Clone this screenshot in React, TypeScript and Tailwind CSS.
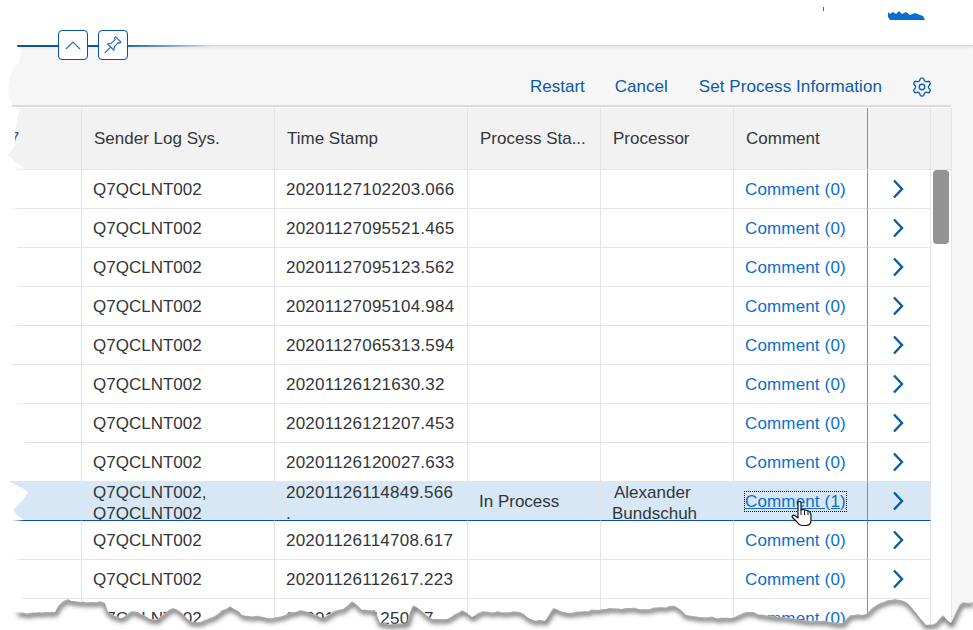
import React from "react";
import { Settings } from "lucide-react";

const rows = [
  "20201127102203.066",
  "20201127095521.465",
  "20201127095123.562",
  "20201127095104.984",
  "20201127065313.594",
  "20201126121630.32",
  "20201126121207.453",
  "20201126120027.633",
  "SEL",
  "20201126114708.617",
  "20201126112617.223",
  "20201126112507.7",
];

const cols = "grid grid-cols-[82px_193px_193px_133px_133px_134px_63px]";

const tearBase =
  "17,612 30,613 45,612 55,612 58,606 62,602 68,599 75,601 80,602 90,602 100,601 105,603 108,612 114,616 120,618 126,615 132,611 140,614 150,619 157,620 165,613 173,608 178,610 182,613 190,621 200,622 207,619 213,617 222,610 230,606 236,610 242,615 255,616 273,618 285,615 300,610 305,611 310,613 323,618 332,612 343,609 348,605 352,601 357,605 362,610 368,610 375,610 380,623 395,624 407,623 410,612 413,605 418,608 423,612 430,618 440,619 447,619 455,614 462,610 467,613 472,617 478,613 483,611 495,612 510,612 520,612 527,617 533,620 545,621 550,613 553,608 560,611 570,613 585,611 603,609 625,608 650,609 660,607 675,606 681,610 686,615 700,617 730,618 743,613 752,612 765,615 776,617 790,618 803,620 820,621 843,623 848,617 850,615 858,614 866,614 872,608 880,603 888,600 895,599 901,600 906,602 912,608 920,618 926,625 936,623 940,618 943,615 947,620 951,623 956,612 960,604 963,602 968,603 973,602";

// the paper's rough edge: the outline above, with a fine fixed jitter
const tear = (() => {
  const pts = tearBase.split(" ").map((p) => p.split(",").map(Number));
  const out: string[] = [];
  pts.forEach(([x, y], i) => {
    out.push(`${x},${y}`);
    const next = pts[i + 1];
    if (!next) return;
    const steps = Math.floor((next[0] - x) / 3);
    for (let s = 1; s < steps; s++) {
      const t = s / steps;
      const px = x + (next[0] - x) * t;
      const py = y + (next[1] - y) * t;
      const j = Math.sin(px * 1.7) * 0.6 + Math.sin(px * 0.73) * 0.4;
      out.push(`${px.toFixed(1)},${(py + j).toFixed(1)}`);
    }
  });
  return out.join(" ");
})();

const leftEdge =
  "0,40 17,40 17,46 21,50 20,60 16,66 12,70 9,80 8,90 9,98 12,104 12,107 20,110 17,120 15,130 15,146 12,150 8,155 13,160 20,165 24,169 12,170 12,208 19,209 19,247 16,248 16,286 21,287 21,325 9,326 9,364 14,365 14,403 25,404 25,442 8,481 20,487 28,492 25,497 20,503 13,510 17,515 24,520 12,521 12,559 22,560 22,598 17,612 0,630";

function Chevron() {
  return (
    <svg width="12" height="20" viewBox="0 0 12 20" className="block">
      <path d="M2 1.5 L10 10 L2 18.5" fill="none" stroke="#0a5aa6" strokeWidth="2.4" />
    </svg>
  );
}

function Row({ time }: { time: string }) {
  const sel = time === "SEL";
  const line = sel ? "border-b-[#0854a0]" : "border-b-[#e5e5e5]";
  const cell = `h-[39px] border-r border-r-[#e5e5e5] border-b ${line} overflow-hidden`;
  const last = `h-[39px] border-r border-r-[#8c8c8c] border-b ${line} overflow-hidden flex items-center`;
  const text = `${cell} flex items-center pt-[2px]`;
  return (
    <div className={`${cols} ${sel ? "bg-[#d8e7f5]" : "bg-white"}`}>
      <div className={cell} />
      {sel ? (
        <>
          <div className={`${cell} pl-[11px] leading-[21px]`}>
            <div>Q7QCLNT002,</div>
            <div>Q7QCLNT002</div>
          </div>
          <div className={`${cell} pl-[11px] leading-[21px] tracking-[0.23px]`}>
            <div>20201126114849.566</div>
            <div>.</div>
          </div>
          <div className={`${text} pl-[11px]`}>In Process</div>
          <div className={`${cell} pl-[11px] leading-[21px]`}>
            <div className="pl-[2px]">Alexander</div>
            <div>Bundschuh</div>
          </div>
          <div className={`${last} pl-[10px]`}>
            <a className="text-[#0a6ed1] underline border border-dotted border-black leading-[19px] tracking-[0.15px]">
              Comment (1)
            </a>
          </div>
        </>
      ) : (
        <>
          <div className={`${text} pl-[11px]`}>Q7QCLNT002</div>
          <div className={`${text} pl-[11px] tracking-[0.23px]`}>{time}</div>
          <div className={cell} />
          <div className={cell} />
          <div className={`${last} pl-[11px] pt-[2px]`}>
            <a className="text-[#0a6ed1] tracking-[0.15px]">Comment (0)</a>
          </div>
        </>
      )}
      <div className={`${cell} flex items-center justify-center pr-[2px]`}>
        <Chevron />
      </div>
    </div>
  );
}

export default function App() {
  return (
    <div className="relative w-[973px] h-[630px] overflow-hidden bg-white text-[17px] text-[#32363a] font-['Liberation_Sans',Arial,sans-serif]">
      <header className="h-[46px] bg-white border-b border-b-[#d9d9d9] shadow-[0_1px_3px_rgba(0,0,0,0.1)] relative z-10" />

      <div className="bg-[#f6f6f7] h-[584px]">
        <div className="h-[61px] border-b-2 border-b-[#dcdcdc] flex items-center justify-end gap-[30px] pr-[18px] text-[#0b5aa5] w-[951px] pt-[23px]">
          <span>Restart</span>
          <span>Cancel</span>
          <span className="tracking-[0.08px] ml-px -mr-px">Set Process Information</span>
          <Settings size={22} strokeWidth={1.5} className="text-[#0a5fb0]" />
        </div>

        <div className="w-[952px] bg-white pt-px">
          <div className="grid grid-cols-[82px_193px_193px_133px_133px_134px_63px_21px] bg-[#f2f2f2] h-[62px] border-b border-b-[#e5e5e5]">
            {["7", "Sender Log Sys.", "Time Stamp", "Process Sta...", "Processor", "Comment", "", ""].map((h, i) => (
              <div
                key={i}
                className={`border-r flex items-center overflow-hidden whitespace-nowrap ${
                  i === 0 ? "pl-[10px] text-[#55585c]" : "pl-[12px]"
                } ${i === 5 ? "border-r-[#8c8c8c]" : "border-r-[#e5e5e5]"}`}
              >
                {h}
              </div>
            ))}
          </div>
          <div className="flex">
            <div className="w-[931px]">
              {rows.map((t) => (
                <Row key={t} time={t} />
              ))}
            </div>
            <div className="w-[21px] border-r border-r-[#e5e5e5] pl-[2px]">
              <div className="w-4 h-[74px] rounded-[4px] bg-[#949494]" />
            </div>
          </div>
        </div>
      </div>

      {/* over the content: the collapse and pin buttons on the header line */}
      <div className="absolute left-[17px] top-[45px] w-[195px] h-[2px] z-20 bg-gradient-to-r from-[#0854a0] via-[#0854a0] to-transparent" />
      <button className="absolute z-30 left-[58px] top-[30px] w-[30px] h-[30px] bg-white border border-[#0854a0] rounded-[4px] flex items-center justify-center">
        <svg width="16" height="9" viewBox="0 0 16 9">
          <path d="M1 8 L8 1 L15 8" fill="none" stroke="#2f6fb5" strokeWidth="1.2" />
        </svg>
      </button>
      <button className="absolute z-30 left-[98px] top-[30px] w-[30px] h-[30px] bg-white border border-[#0854a0] rounded-[4px] flex items-center justify-center">
        <svg width="18" height="18" viewBox="0 0 18 18">
          <path
            d="M0.8 17 L6.2 11.6 M3.6 8 L7.2 7.4 L11.2 3.6 L10.3 2 L11.8 0.9 L16.9 6 L15.8 7.4 L14.3 6.6 L10.4 10.6 L9.9 14.2 Z"
            fill="none"
            stroke="#2f6fb5"
            strokeWidth="1.2"
            strokeLinejoin="round"
          />
        </svg>
      </button>

      {/* the mouse pointer */}
      <svg className="absolute z-30 left-[791px] top-[500px]" width="22" height="27" viewBox="0 0 22 27">
        <path
          d="M7 2.5 C7 1 10 1 10 2.5 L10 10 L12 9.5 L14 10 L16 10.5 L18 11.5 C19.5 12 20 13 20 15 L20 20 C20 23.5 18 25.5 15 25.5 L11 25.5 C8.5 25.5 7.5 24 6 22 L1.5 17.5 C0.5 16 2 14.5 3.5 15.3 L7 18 Z"
          fill="#fff"
          stroke="#111"
          strokeWidth="1.2"
          strokeLinejoin="round"
        />
        <path d="M10 10 L10 15 M13.5 10 L13.5 15 M17 11 L17 15" stroke="#111" strokeWidth="1" />
      </svg>

      {/* the torn edge of the screenshot */}
      <svg className="absolute z-20 left-0 top-0" width="973" height="630" viewBox="0 0 973 630">
        <defs>
          <filter id="tornBlur" x="-5%" y="-200%" width="110%" height="500%">
            <feGaussianBlur stdDeviation="2.4" />
          </filter>
          <clipPath id="below">
            <polygon points={`${tear} 973,630 0,630 0,612`} />
          </clipPath>
        </defs>
        <polygon points={leftEdge} fill="#fff" />
        <polygon points={`${tear} 973,630 0,630 0,612`} fill="#fff" />
        <g clipPath="url(#below)">
          <polyline
            points={tear}
            transform="translate(1 2)"
            fill="none"
            stroke="#4a4a4a"
            strokeWidth="3.5"
            filter="url(#tornBlur)"
          />
        </g>
        <path d="M823 7 L824 7 L824 11 L823 11 Z" fill="#2a6fb8" />
        <path
          d="M888 12 L890 14 L893 12 L896 14 L899 11 L902 14 L906 12 L910 15 L915 13 L920 15 L923 16 L925 20 L890 20 L888 17 Z"
          fill="#0a6ed1"
        />
      </svg>
    </div>
  );
}
